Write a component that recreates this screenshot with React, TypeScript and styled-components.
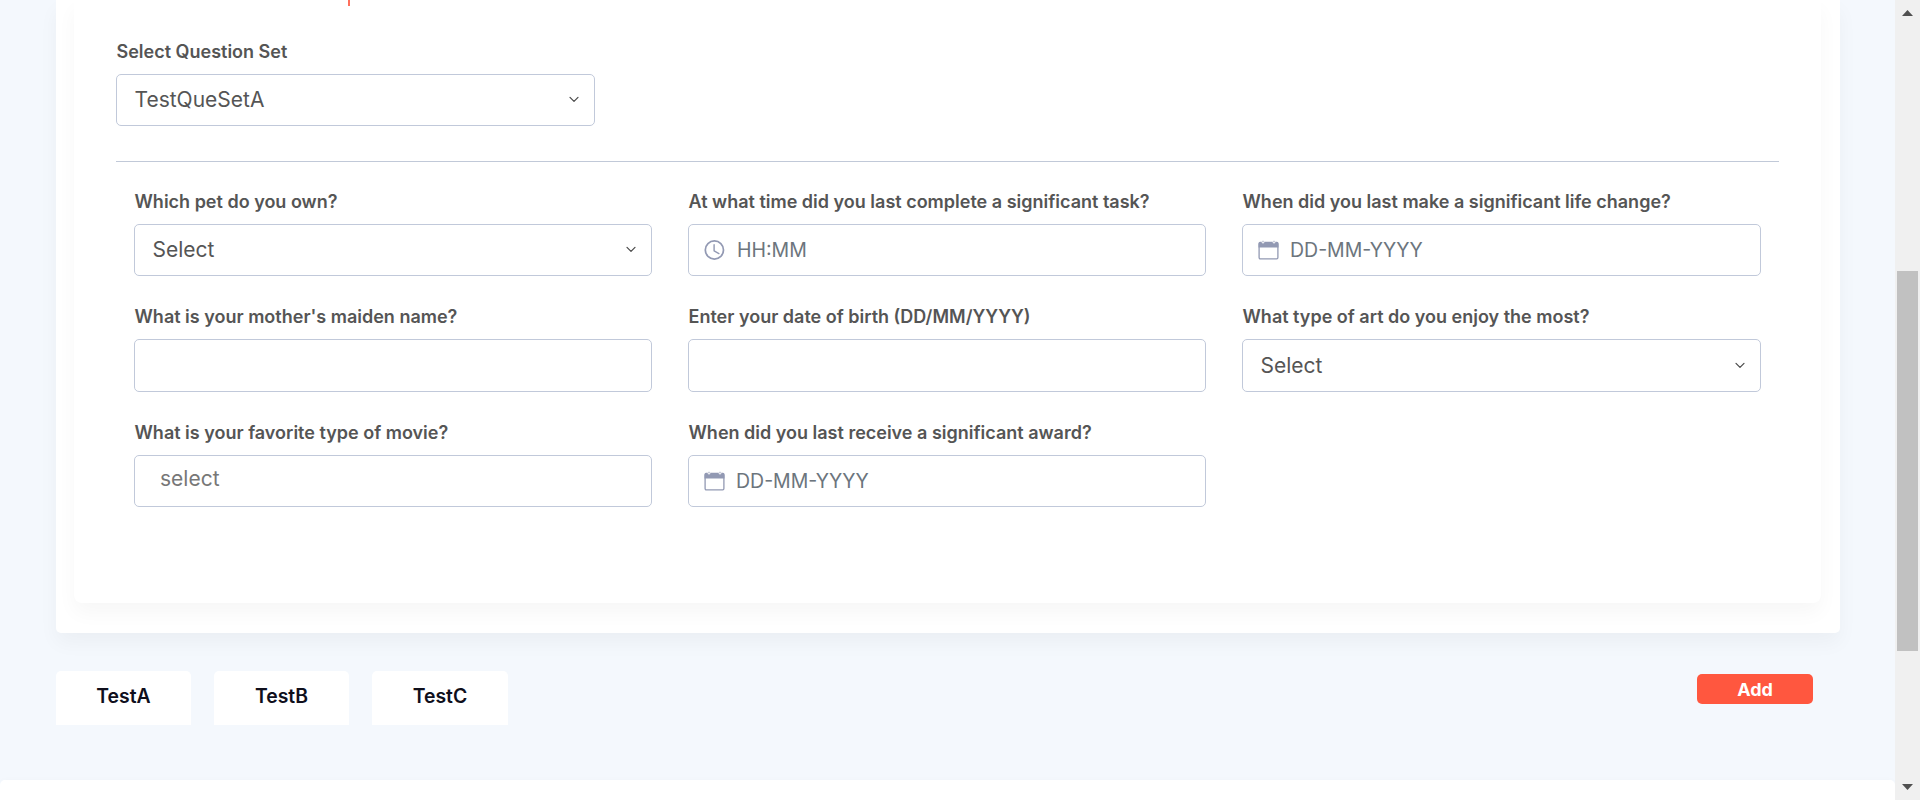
import React from 'react';
import styled, { createGlobalStyle } from 'styled-components';

const Global = createGlobalStyle`
  *, *::before, *::after { box-sizing: border-box; }
  html, body, #root { height: 100%; }
  body { margin: 0; overflow: hidden; background: #f4f8fd; font-family: Inter, "Liberation Sans", sans-serif; color: #555; }
  input, button { font-family: inherit; }
`;

const Window = styled.div`
  display: flex;
  height: 800px;
  overflow: hidden;
`;

const Page = styled.main`
  flex: 1;
  min-width: 0;
  height: 800px;
  display: flex;
  flex-direction: column;
  overflow: hidden;
`;

const OuterCard = styled.section`
  flex: none;
  height: 633px;
  margin: 0 55px 0 56px;
  padding: 0 19px 30px 18px;
  background: #fff;
  border-radius: 0 0 5px 5px;
  box-shadow: 0 10px 20px rgba(0, 0, 0, 0.04);
`;

const InnerCard = styled.div`
  height: 603px;
  padding: 0 42px;
  background: #fff;
  border-radius: 0 0 8px 8px;
  box-shadow: 0 10px 20px rgba(0, 0, 0, 0.035);
`;

const TabMarker = styled.div`
  width: 2px;
  height: 6px;
  margin-left: 232px;
  background: #ff573f;
  opacity: 0.85;
`;

const QuestionSet = styled.div`
  width: 479px;
  padding-top: 35px;
`;

const Divider = styled.hr`
  height: 1px;
  margin: 35px 0 0;
  border: 0;
  background: #c1c9d8;
`;

const Questions = styled.div`
  display: grid;
  grid-template-columns: 518px 518px 519px;
  grid-template-rows: 85px 86px 85px;
  row-gap: 30px;
  column-gap: 36px;
  padding: 29px 18px 0;
`;

const FieldBox = styled.div`
  display: flex;
  flex-direction: column;
  height: 100%;
`;

const Label = styled.label`
  height: 22px;
  margin: 0 0 11px 0.5px;
  font-size: 18px;
  font-weight: 600;
  line-height: 22px;
  white-space: nowrap;
  color: #555;
`;

const Control = styled.div<{ $icon?: boolean }>`
  display: flex;
  align-items: center;
  flex: 1;
  min-height: 52px;
  padding: 0 14px 0 ${(p) => (p.$icon ? 14.5 : 17.5)}px;
  border: 1px solid #c1c9da;
  border-radius: 5px;
  background: #fff;
`;

const Value = styled.span`
  flex: 1;
  font-size: 21px;
  line-height: 30px;
  color: #555;
`;

const Placeholder = styled.span<{ $gap: number }>`
  margin-left: ${(p) => p.$gap}px;
  font-size: 19.5px;
  line-height: 28px;
  color: #6c757d;
`;

const MultiPlaceholder = styled.span`
  padding: 0 0 5px 7.5px;
  font-size: 21px;
  line-height: 30px;
  color: #777;
`;

const Footer = styled.div`
  display: flex;
  justify-content: space-between;
  align-items: flex-start;
  padding: 38px 82px 0 56px;
  height: 147px;
  flex: none;
`;

const Tabs = styled.div`
  display: flex;
  gap: 23px;
`;

const Tab = styled.button<{ $width?: number }>`
  width: ${(p) => p.$width ?? 135}px;
  height: 54px;
  padding: 0 0 4px;
  border: 0;
  border-radius: 5px 5px 0 0;
  background: #fff;
  font-size: 19.4px;
  font-weight: 600;
  line-height: 28px;
  color: #0f0f1c;
`;

const AddButton = styled.button`
  width: 116px;
  height: 30px;
  margin-top: 3px;
  padding: 0;
  border: 0;
  border-radius: 5px;
  background: #ff573f;
  font-size: 18px;
  font-weight: 700;
  line-height: 31px;
  color: #fff;
`;

const NextPanel = styled.div`
  flex: 1;
  background: #fff;
  border-radius: 5px 5px 0 0;
  box-shadow: 0 0 6px rgba(0, 0, 0, 0.02);
`;

const Scrollbar = styled.aside`
  display: flex;
  flex-direction: column;
  align-items: center;
  width: 25px;
  padding: 10px 0 10px;
  background: #f0f0f0;
`;

const Thumb = styled.div`
  width: 21px;
  height: 380px;
  margin-top: 255px;
  margin-bottom: auto;
  background: #c1c1c1;
`;

const Chevron = () => (
  <svg width="12" height="12" viewBox="0 0 12 12" fill="none" stroke="#484848" strokeWidth="1.2" strokeLinecap="round" strokeLinejoin="round">
    <path d="M2 3.4 6 7.4 10 3.4" />
  </svg>
);

const Clock = () => (
  <svg width="21" height="20" viewBox="0 0 21 20" fill="none" stroke="#9299b3" strokeWidth="1.7">
    <circle cx="10.4" cy="10" r="9.1" />
    <path d="M10.1 4.8v6l4.8 2.8" strokeWidth="1.4" strokeLinecap="round" />
  </svg>
);

const Calendar = () => (
  <svg width="21" height="20" viewBox="0 0 21 20">
    <rect x="1.1" y="3" width="18.8" height="15.8" rx="1.2" fill="#fff" stroke="#9299b3" strokeWidth="1.3" />
    <path d="M.5 7.6V3.4q0-1.6 1.5-1.6H19q1.5 0 1.5 1.6v4.2z" fill="#9299b3" />
    <circle cx="5" cy="2" r="1.4" fill="#fff" />
    <circle cx="16" cy="2" r="1.4" fill="#fff" />
    <path d="M5 .8v1.6M16 .8v1.6" stroke="#9299b3" strokeWidth="1" />
  </svg>
);

type Kind = 'select' | 'time' | 'date' | 'text' | 'multi';

const Field = ({ label, kind, value = 'Select' }: { label: string; kind: Kind; value?: string }) => (
  <FieldBox>
    <Label>{label}</Label>
    <Control $icon={kind === 'time' || kind === 'date'}>
      {kind === 'select' && (<><Value>{value}</Value><Chevron /></>)}
      {kind === 'time' && (<><Clock /><Placeholder $gap={12.5}>HH:MM</Placeholder></>)}
      {kind === 'date' && (<><Calendar /><Placeholder $gap={11.5}>DD-MM-YYYY</Placeholder></>)}
      {kind === 'multi' && <MultiPlaceholder>select</MultiPlaceholder>}
    </Control>
  </FieldBox>
);

const questions: { label: string; kind: Kind }[] = [
  { label: 'Which pet do you own?', kind: 'select' },
  { label: 'At what time did you last complete a significant task?', kind: 'time' },
  { label: 'When did you last make a significant life change?', kind: 'date' },
  { label: "What is your mother's maiden name?", kind: 'text' },
  { label: 'Enter your date of birth (DD/MM/YYYY)', kind: 'text' },
  { label: 'What type of art do you enjoy the most?', kind: 'select' },
  { label: 'What is your favorite type of movie?', kind: 'multi' },
  { label: 'When did you last receive a significant award?', kind: 'date' },
];

export default function App() {
  return (
    <>
      <Global />
      <Window>
        <Page>
          <OuterCard>
            <InnerCard>
              <TabMarker />
              <QuestionSet>
                <Field label="Select Question Set" kind="select" value="TestQueSetA" />
              </QuestionSet>
              <Divider />
              <Questions>
                {questions.map((q) => <Field key={q.label} {...q} />)}
              </Questions>
            </InnerCard>
          </OuterCard>
          <Footer>
            <Tabs>
              <Tab>TestA</Tab>
              <Tab>TestB</Tab>
              <Tab $width={136}>TestC</Tab>
            </Tabs>
            <AddButton>Add</AddButton>
          </Footer>
          <NextPanel />
        </Page>
        <Scrollbar>
          <svg width="11" height="6" viewBox="0 0 11 6"><path d="M0 6 5.5 0 11 6z" fill="#505050" /></svg>
          <Thumb />
          <svg width="11" height="6" viewBox="0 0 11 6"><path d="M0 0 5.5 6 11 0z" fill="#505050" /></svg>
        </Scrollbar>
      </Window>
    </>
  );
}
